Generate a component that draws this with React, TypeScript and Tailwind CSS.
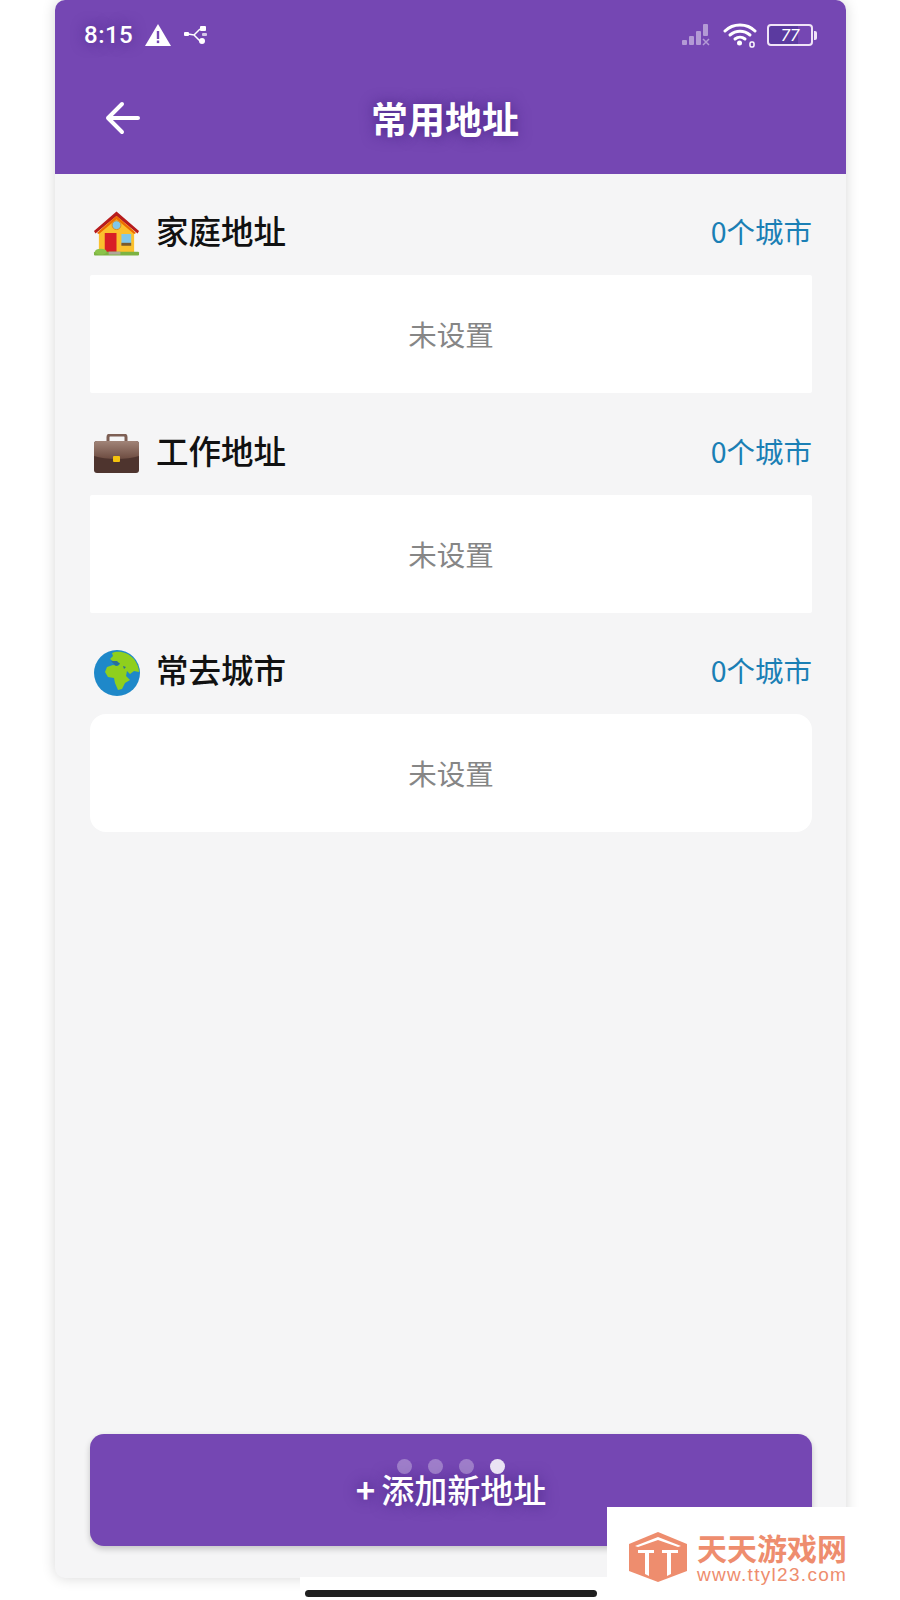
import type { ReactNode } from 'react';

const cjk = "font-['Noto_Sans_CJK_SC','Noto_Sans',sans-serif]";
const glow = '[text-shadow:0_0_14px_rgba(60,25,120,0.75)]';

const HouseIcon = () => (
  <svg width="48" height="46" viewBox="0 0 48 46">
    <path d="M6 20 24 4l18 16v22H6z" fill="#fbc02d" />
    <path d="M1 20 24 0l23 20-1.500 2.500L24 4.500 2.500 22.500z" fill="#b71c1c" />
    <path d="M4 22 24 4.500 44 22l-2 1L24 8 6 23z" fill="#ef6c00" />
    <circle cx="24" cy="14" r="4.500" fill="#81c7e8" stroke="#d98b1a" />
    <rect x="12" y="22" width="12" height="20" fill="#d81f26" />
    <rect x="29" y="23" width="10" height="11" fill="#81c7e8" />
    <rect x="29" y="32" width="10" height="3" fill="#7a5a2a" />
    <rect x="1" y="41" width="46" height="4" rx="1" fill="#7cb342" />
    <ellipse cx="8" cy="41" rx="6" ry="3" fill="#8bc34a" />
    <rect x="16" y="41" width="12" height="3" fill="#b0a89a" />
  </svg>
);

const CaseIcon = () => (
  <svg width="46" height="40" viewBox="0 0 46 40">
    <defs>
      <linearGradient id="caseTop" x1="0" y1="0" x2="0" y2="1">
        <stop offset="0" stopColor="#a18478" />
        <stop offset="1" stopColor="#6d4c41" />
      </linearGradient>
    </defs>
    <path d="M14 8V3a2 2 0 0 1 2-2h14a2 2 0 0 1 2 2v5" fill="none" stroke="#7d5f54" strokeWidth="3" />
    <rect x="0" y="7" width="45" height="32" rx="3" fill="#4e342e" />
    <path d="M0 10a3 3 0 0 1 3-3h39a3 3 0 0 1 3 3v12c-12 4-33 4-45 0z" fill="url(#caseTop)" />
    <rect x="19" y="22" width="7" height="6" rx="1" fill="#f4c20d" />
  </svg>
);

const GlobeIcon = () => (
  <svg width="46" height="46" viewBox="0 0 46 46">
    <circle cx="23" cy="23" r="23" fill="#1e88c9" />
    <path
      d="M18 3C24 0 34 2 40 9c3 4 5 9 5 13l-5-1-4 3-3-3-1 5 4 4-5 3-3 6-4 1-3-7-1-5-6-1-3-5 2-5 6-2 5 1 2-3-6-1-4-3 3-3z"
      fill="#8fcf1d"
    />
    <path d="M17 11l6 0 3 3-4 2zM29 16l3 1-2 2z" fill="#2a6f97" />
  </svg>
);

const SignalIcon = () => (
  <svg width="32" height="24" viewBox="0 0 32 24" fill="#fff" opacity="0.45">
    <rect x="1" y="17" width="5" height="5" rx="1" />
    <rect x="8" y="13" width="5" height="9" rx="1" />
    <rect x="15" y="8" width="5" height="14" rx="1" />
    <rect x="22" y="1" width="5" height="12" rx="1" />
    <path d="M22 16l6 6M28 16l-6 6" stroke="#fff" strokeWidth="1.5" />
  </svg>
);

const WifiIcon = () => (
  <svg width="34" height="26" viewBox="0 0 34 26" fill="none" stroke="#fff" strokeLinecap="round">
    <path d="M2 9c8-8 22-8 30 0" strokeWidth="3" />
    <path d="M7 13c6-5 14-5 20 0" strokeWidth="3" />
    <path d="M12 17c3-2.500 7-2.500 10 0" strokeWidth="3" />
    <circle cx="16.500" cy="21" r="2.500" fill="#fff" stroke="none" />
    <rect x="27" y="20" width="4" height="5" rx="1.500" strokeWidth="1.500" />
  </svg>
);

const UsbIcon = () => (
  <svg width="26" height="20" viewBox="0 0 26 20" fill="#fff">
    <rect x="0" y="7" width="5" height="4" rx="1" />
    <path d="M4 9l6 1 6-6M10 10l6 6" stroke="#fff" strokeWidth="1.500" fill="none" />
    <rect x="16" y="1" width="6" height="5" rx="1" />
    <circle cx="18" cy="16" r="3" />
    <rect x="18" y="8" width="5" height="3" rx="1" opacity="0.7" />
  </svg>
);

const Section = ({
  icon,
  title,
  cardClass,
  className
}: {
  icon: ReactNode;
  title: string;
  cardClass: string;
  className?: string;
}) => (
  <section className={className}>
    <div className="mb-[18px] flex h-[50px] items-center">
      <div className="ml-[3px] mt-[4px] flex w-[47px] items-center justify-center">{icon}</div>
      <h3 className="mb-[3px] ml-[16px] text-[32.500px] font-medium leading-none text-[#111]">{title}</h3>
      <span className="mb-[2px] ml-auto text-[28.500px] leading-none text-[#1a7fb5]">0个城市</span>
    </div>
    <div className={`flex h-[118px] items-center justify-center bg-white text-[28.500px] text-[#868686] ${cardClass}`}>
      未设置
    </div>
  </section>
);

const App = () => {
  return (
    <div className={`relative h-[1600px] w-[900px] overflow-hidden bg-white ${cjk}`}>
      <div className="ml-[55px] flex h-[1578px] w-[791px] flex-col overflow-hidden rounded-[10px] bg-[#f5f5f6] shadow-[0_0_14px_rgba(0,0,0,0.16)]">
        <header className="h-[174px] shrink-0 bg-[#7547b3] text-white">
          <div className="flex h-[70px] items-center pl-[29px] pr-[29px]">
            <span className={`font-['Roboto',sans-serif] text-[24px] font-medium tracking-[0.5px] ${glow}`}>8:15</span>
            <svg className="ml-[12px]" width="26" height="22" viewBox="0 0 26 22">
              <path d="M13 0 26 22H0z" fill="#fff" />
              <rect x="11.800" y="7" width="2.400" height="8" fill="#7547b3" />
              <rect x="11.800" y="16.500" width="2.400" height="2.600" fill="#7547b3" />
            </svg>
            <div className="ml-[13px]">
              <UsbIcon />
            </div>
            <div className="ml-auto flex items-center gap-[10px]">
              <SignalIcon />
              <WifiIcon />
              <div className="flex items-center">
                <div className="flex h-[22px] w-[46px] items-center justify-center rounded-[4px] border-2 border-[#f0e4f7] bg-[linear-gradient(90deg,#5b3aa0_0%,#5b3aa0_70%,transparent_70%)]">
                  <span className="font-['Roboto',sans-serif] text-[17px] italic leading-none">77</span>
                </div>
                <div className="ml-[1px] h-[9px] w-[3px] rounded-r-[2px] bg-[#f0e4f7]" />
              </div>
            </div>
          </div>
          <div className="flex h-[96px] items-center pl-[50px] pr-[97px]">
            <svg width="36" height="36" viewBox="0 0 36 36" fill="none" stroke="#fff" strokeWidth="4" strokeLinecap="round" strokeLinejoin="round">
              <path d="M33 18H3M17 4 3 18l14 14" />
            </svg>
            <h1 className={`flex-1 text-center text-[37px] font-semibold leading-none ${glow}`}>常用地址</h1>
          </div>
        </header>
        <main className="flex flex-1 flex-col pl-[35px] pr-[34px] pt-[33px]">
          <Section icon={<HouseIcon />} title="家庭地址" cardClass="rounded-[2px]" />
          <Section icon={<CaseIcon />} title="工作地址" cardClass="rounded-[2px]" className="mt-[34px]" />
          <Section icon={<GlobeIcon />} title="常去城市" cardClass="rounded-[16px]" className="mt-[33px]" />
          <button
            type="button"
            className={`relative mb-[32px] mt-auto flex h-[112px] items-center justify-center rounded-[14px] bg-[#7547b3] text-[33px] font-medium text-white shadow-[0_3px_6px_rgba(0,0,0,0.2)] ${glow}`}
          >
            <span className="mr-[6px] font-bold">+</span>添加新地址
            <div className="absolute left-1/2 top-[25px] flex -translate-x-1/2 gap-[16px]">
              <span className="h-[15px] w-[15px] rounded-full bg-white/30" />
              <span className="h-[15px] w-[15px] rounded-full bg-white/30" />
              <span className="h-[15px] w-[15px] rounded-full bg-white/30" />
              <span className="h-[15px] w-[15px] rounded-full bg-white/85" />
            </div>
          </button>
        </main>
      </div>

      <div className="absolute bottom-0 left-[300px] h-[23px] w-[310px] bg-white" />
      <div className="absolute bottom-[3px] left-[305px] h-[7px] w-[292px] rounded-full bg-[#1f1f1f]" />

      <div className="absolute bottom-0 left-[607px] flex h-[93px] w-[293px] items-center bg-white pl-[22px] pt-[6px]">
        <svg width="58" height="50" viewBox="0 0 58 50" fill="#ee8d6e">
          <path d="M29 0 58 12v27L29 50 0 39V12z" />
          <path d="M6 14 29 5l23 9-3 1-20-7-20 7z" fill="#fff" />
          <path d="M9 18h16v3h-5v23l-4-2V21H9zM33 18h16v3h-7v21l-4 2V21h-5z" fill="#fff" />
        </svg>
        <div className="ml-[10px] flex flex-col">
          <span className="text-[30px] font-bold leading-[36px] text-[#ee8d6e]">天天游戏网</span>
          <span className="font-['Liberation_Sans',sans-serif] text-[19px] leading-[20px] tracking-[1.300px] text-[#ee8d6e]">www.ttyl23.com</span>
        </div>
      </div>
    </div>
  );
};

export default App;
